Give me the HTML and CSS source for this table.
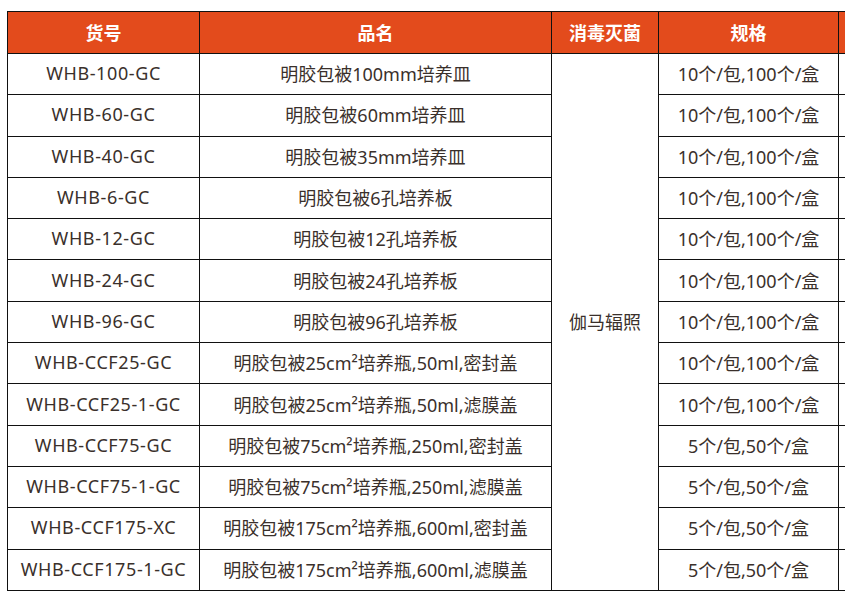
FILE: index.html
```html
<!DOCTYPE html>
<html lang="zh">
<head>
<meta charset="utf-8">
<link rel="stylesheet" href="styles.css">
</head>
<body>
<div class="wrap">
<table class="spec">
  <colgroup>
    <col class="c1"><col class="c2"><col class="c3"><col class="c4"><col class="c5">
  </colgroup>
  <thead>
    <tr><th>货号</th><th>品名</th><th>消毒灭菌</th><th>规格</th><th></th></tr>
  </thead>
  <tbody>
    <tr><td class="code">WHB-100-GC</td><td>明胶包被100mm培养皿</td><td rowspan="13">伽马辐照</td><td>10个/包,100个/盒</td><td></td></tr>
    <tr><td class="code">WHB-60-GC</td><td>明胶包被60mm培养皿</td><td>10个/包,100个/盒</td><td></td></tr>
    <tr><td class="code">WHB-40-GC</td><td>明胶包被35mm培养皿</td><td>10个/包,100个/盒</td><td></td></tr>
    <tr><td class="code">WHB-6-GC</td><td>明胶包被6孔培养板</td><td>10个/包,100个/盒</td><td></td></tr>
    <tr><td class="code">WHB-12-GC</td><td>明胶包被12孔培养板</td><td>10个/包,100个/盒</td><td></td></tr>
    <tr><td class="code">WHB-24-GC</td><td>明胶包被24孔培养板</td><td>10个/包,100个/盒</td><td></td></tr>
    <tr><td class="code">WHB-96-GC</td><td>明胶包被96孔培养板</td><td>10个/包,100个/盒</td><td></td></tr>
    <tr><td class="code">WHB-CCF25-GC</td><td>明胶包被25cm²培养瓶,50ml,密封盖</td><td>10个/包,100个/盒</td><td></td></tr>
    <tr><td class="code">WHB-CCF25-1-GC</td><td>明胶包被25cm²培养瓶,50ml,滤膜盖</td><td>10个/包,100个/盒</td><td></td></tr>
    <tr><td class="code">WHB-CCF75-GC</td><td>明胶包被75cm²培养瓶,250ml,密封盖</td><td>5个/包,50个/盒</td><td></td></tr>
    <tr><td class="code">WHB-CCF75-1-GC</td><td>明胶包被75cm²培养瓶,250ml,滤膜盖</td><td>5个/包,50个/盒</td><td></td></tr>
    <tr><td class="code">WHB-CCF175-XC</td><td>明胶包被175cm²培养瓶,600ml,密封盖</td><td>5个/包,50个/盒</td><td></td></tr>
    <tr><td class="code">WHB-CCF175-1-GC</td><td>明胶包被175cm²培养瓶,600ml,滤膜盖</td><td>5个/包,50个/盒</td><td></td></tr>
  </tbody>
</table>
</div>
</body>
</html>
```
FILE: styles.css
```css
html, body {
  margin: 0;
  padding: 0;
  background: #ffffff;
  overflow: hidden;
}
.wrap {
  padding: 11px 0 0 7px;
  width: 1100px;
}
.spec {
  border-collapse: collapse;
  table-layout: fixed;
  width: 981px;
  font-family: "Noto Sans", "Noto Sans CJK SC", sans-serif;
  font-size: 18px;
  color: #3a302b;
}
.c1 { width: 192px; }
.c2 { width: 352px; }
.c3 { width: 107px; }
.c4 { width: 180px; }
.c5 { width: 150px; }
.spec th, .spec td {
  border: 1px solid #111;
  text-align: center;
  padding: 0 0 2px;
  white-space: nowrap;
}
.spec th {
  background: #e34b1c;
  color: #ffffff;
  font-weight: 700;
  height: 39px;
  font-size: 18px;
}
.spec td {
  height: 38.3px;
}
.spec td.code {
  letter-spacing: 0.6px;
}
```
